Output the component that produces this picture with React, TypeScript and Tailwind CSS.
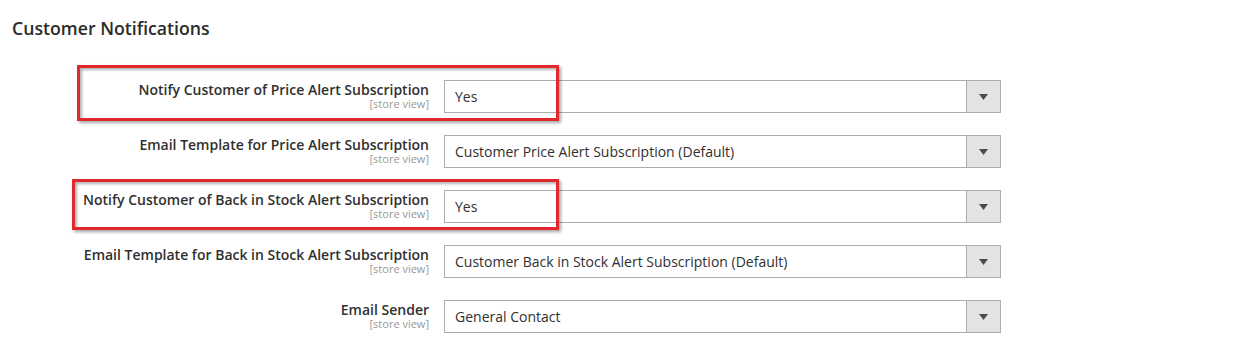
import React from 'react';

interface Field {
  label: string;
  value: string;
}

const fields: Field[] = [
  { label: 'Notify Customer of Price Alert Subscription', value: 'Yes' },
  { label: 'Email Template for Price Alert Subscription', value: 'Customer Price Alert Subscription (Default)' },
  { label: 'Notify Customer of Back in Stock Alert Subscription', value: 'Yes' },
  { label: 'Email Template for Back in Stock Alert Subscription', value: 'Customer Back in Stock Alert Subscription (Default)' },
  { label: 'Email Sender', value: 'General Contact' },
];

const SelectBox: React.FC<{ value: string }> = ({ value }) => (
  <div className="flex h-[33px] w-[557px] border border-[#adadad] bg-white">
    <div className="flex flex-1 items-center pl-[10px] text-[14px] text-[#303030]">{value}</div>
    <div className="flex w-[34px] items-center justify-center border-l border-[#adadad] bg-[#e3e3e3]">
      <svg width="9" height="6" viewBox="0 0 9 6">
        <path d="M0 0h9L4.5 6z" fill="#514943" />
      </svg>
    </div>
  </div>
);

export default function App() {
  return (
    <div className="relative h-[355px] w-[1257px] bg-white" style={{ fontFamily: '"Open Sans", "Liberation Sans", sans-serif' }}>
      <h2 className="pl-[12px] pt-[16px] text-[17.7px] font-semibold leading-[24px] text-[#2b2b2b]">
        Customer Notifications
      </h2>

      <div className="mt-[40px] flex flex-col gap-[22px]">
        {fields.map((f) => (
          <div key={f.label} className="flex">
            <div className="w-[429px] pt-[2px] text-right">
              <div className="text-[14px] font-semibold leading-[15px] text-[#303030]">{f.label}</div>
              <div className="text-[11px] leading-[13px] text-[#999999]">[store view]</div>
            </div>
            <div className="pl-[15px]">
              <SelectBox value={f.value} />
            </div>
          </div>
        ))}
      </div>

      {/* highlight boxes */}
      <div className="pointer-events-none absolute left-[77px] top-[65px] h-[56px] w-[482px] border-[3px] border-[#e2282c] shadow-[2px_2px_3px_rgba(0,0,0,0.35),inset_2px_2px_3px_rgba(0,0,0,0.3)]" />
      <div className="pointer-events-none absolute left-[72px] top-[179px] h-[51px] w-[487px] border-[3px] border-[#e2282c] shadow-[2px_2px_3px_rgba(0,0,0,0.35),inset_2px_2px_3px_rgba(0,0,0,0.3)]" />
    </div>
  );
}
